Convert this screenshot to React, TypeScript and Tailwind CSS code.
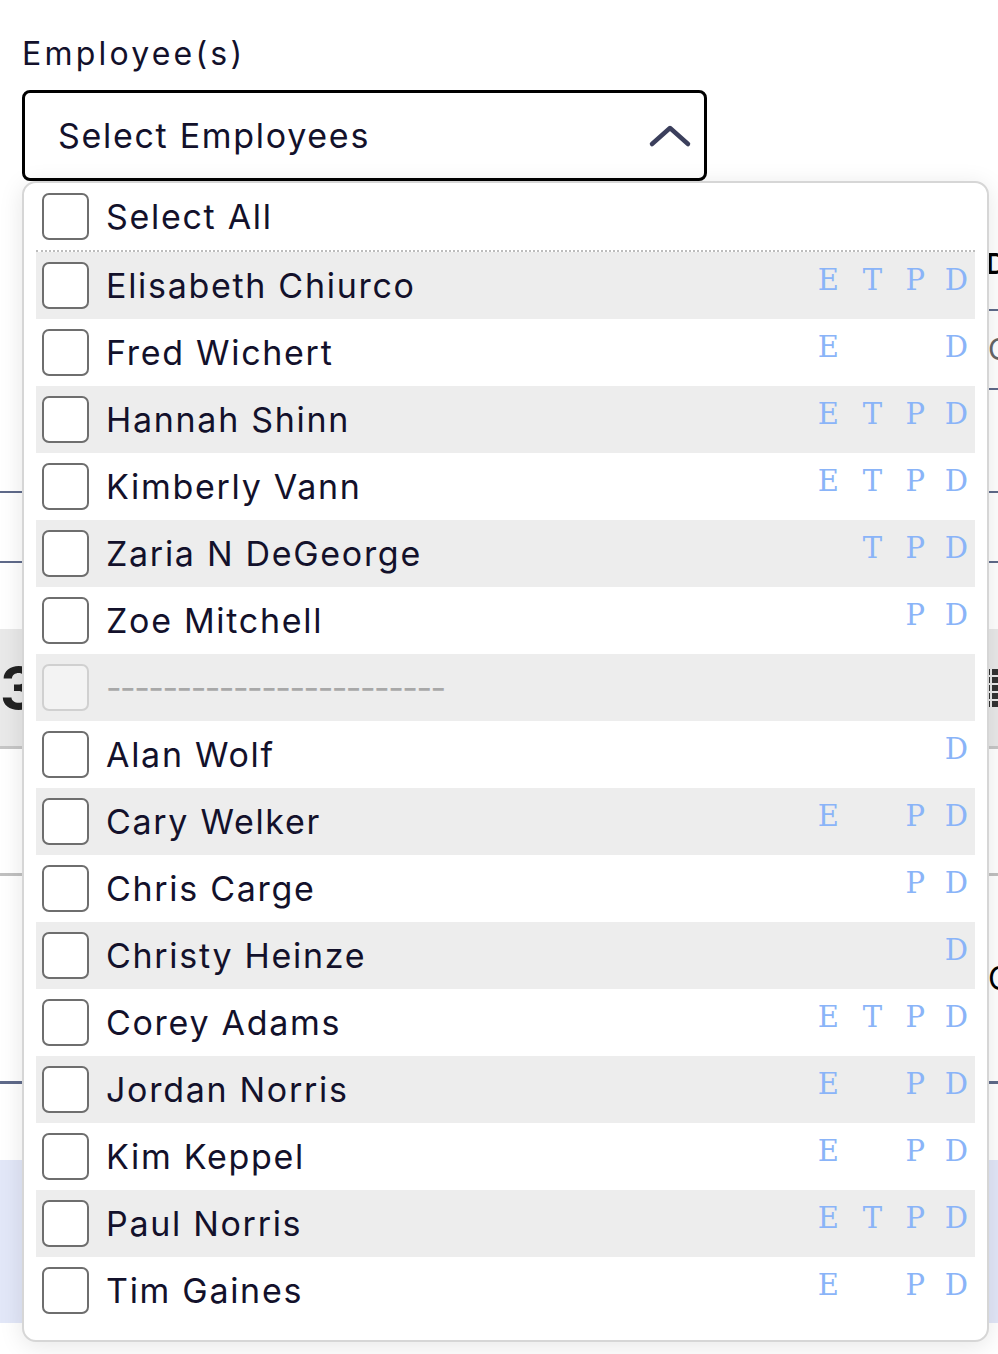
import React from "react";

type Emp = { name: string; flags: string[]; sep?: boolean };

const emps: Emp[] = [
  { name: "Elisabeth Chiurco", flags: ["E", "T", "P", "D"] },
  { name: "Fred Wichert", flags: ["E", "", "", "D"] },
  { name: "Hannah Shinn", flags: ["E", "T", "P", "D"] },
  { name: "Kimberly Vann", flags: ["E", "T", "P", "D"] },
  { name: "Zaria N DeGeorge", flags: ["", "T", "P", "D"] },
  { name: "Zoe Mitchell", flags: ["", "", "P", "D"] },
  { name: "", flags: [], sep: true },
  { name: "Alan Wolf", flags: ["", "", "", "D"] },
  { name: "Cary Welker", flags: ["E", "", "P", "D"] },
  { name: "Chris Carge", flags: ["", "", "P", "D"] },
  { name: "Christy Heinze", flags: ["", "", "", "D"] },
  { name: "Corey Adams", flags: ["E", "T", "P", "D"] },
  { name: "Jordan Norris", flags: ["E", "", "P", "D"] },
  { name: "Kim Keppel", flags: ["E", "", "P", "D"] },
  { name: "Paul Norris", flags: ["E", "T", "P", "D"] },
  { name: "Tim Gaines", flags: ["E", "", "P", "D"] },
];

function Box({ disabled }: { disabled?: boolean }) {
  return disabled ? (
    <div className="h-[47px] w-[47px] shrink-0 rounded-[7px] border-2 border-[#d0d0d0] bg-[#f3f3f3]" />
  ) : (
    <div className="h-[47px] w-[47px] shrink-0 rounded-[7px] border-2 border-[#6e6e6e] bg-white" />
  );
}

function Row({ e, idx }: { e: Emp; idx: number }) {
  const shaded = idx % 2 === 0;
  return (
    <div
      className={
        "flex h-[67px] items-center pl-[6px] pr-[7px] " +
        (shaded ? "bg-[#ededed]" : "bg-white")
      }
    >
      <Box disabled={e.sep} />
      {e.sep ? (
        <span className="ml-[17px] whitespace-pre text-[34px] leading-none tracking-[-0.045em] text-[#a8a8a8]">
          ------------------------
        </span>
      ) : (
        <span className="ml-[17px] whitespace-nowrap text-[34px] leading-none tracking-[0.05em] text-[#13112b]">
          {e.name}
        </span>
      )}
      {!e.sep && (
        <div className="ml-auto mt-[14px] flex self-start font-['DejaVu_Serif',serif] text-[29px] leading-[29px] text-[#8ab4f8]">
          {e.flags.map((f, i) => (
            <span key={i} className="w-[43px] text-right">
              {f}
            </span>
          ))}
        </div>
      )}
    </div>
  );
}

export default function App() {
  return (
    <div className="relative min-h-[1354px] overflow-hidden bg-white font-['Inter',sans-serif] text-[#13112b]">
      <div className="px-[22px] pt-[35px]">
        <div className="text-[32px] leading-[38px] tracking-[0.1em]">Employee(s)</div>
        <div className="mt-[17px] flex h-[91px] w-[685px] items-center justify-between rounded-[8px] border-[3px] border-black pl-[33px] pr-[12px]">
          <span className="text-[34px] leading-none tracking-[0.05em]">Select Employees</span>
          <svg width="44" height="26" viewBox="0 0 44 26" fill="none">
            <path d="M4 21 L22 5 L40 21" stroke="#3b3f5c" strokeWidth="4.5" strokeLinecap="round" strokeLinejoin="round" />
          </svg>
        </div>
      </div>

      {/* background page content under the dropdown */}
      <div className="flex flex-col">
        <div className="flex h-[130px]">
          <div className="flex-1" />
          <div className="flex w-[280px] flex-col justify-end border-b-2 border-[#5f6a8a] pb-[24px]">
            <span className="whitespace-nowrap pl-[268px] text-[28px] font-semibold text-black">Dept</span>
          </div>
        </div>
        <div className="flex h-[79px]">
          <div className="flex-1" />
          <div className="flex w-[280px] items-center border-b-2 border-[#5f6a8a]">
            <span className="whitespace-nowrap pl-[270px] text-[30px] text-[#666]">Choose</span>
          </div>
        </div>
        <div className="h-[103px] border-b-2 border-[#5f6a8a]" />
        <div className="h-[70px] border-b-2 border-[#5f6a8a]" />
        <div className="h-[66px]" />
        <div className="flex h-[120px] items-center justify-between border-b-[3px] border-[#c6c6c6] bg-[#e9e9e9]">
          <span className="text-[58px] font-bold leading-none text-[#222]">3</span>
          <div className="grid grid-cols-2 gap-[2px]">
            {Array.from({ length: 10 }).map((_, i) => (
              <div key={i} className="h-[6px] w-[6px] bg-[#333]" />
            ))}
          </div>
        </div>
        <div className="h-[127px] border-b-[3px] border-[#c0c0c0]" />
        <div className="flex h-[208px] items-center border-b-[3px] border-[#5f6a8a] pl-[988px]">
          <span className="whitespace-nowrap text-[32px] text-black">C</span>
        </div>
        <div className="h-[76px]" />
        <div className="h-[163px] bg-[#e2e7f8]" />
      </div>

      {/* dropdown panel */}
      <div className="absolute left-[22px] top-[181px] w-[967px] rounded-[14px] border-2 border-[#d6d6d6] bg-white px-[12px] pb-[16px] shadow-[0_4px_24px_rgba(0,0,0,0.10)]">
        <div className="flex h-[69px] items-center border-b-2 border-dotted border-[#bdbdbd] pl-[6px]">
          <Box />
          <span className="ml-[17px] text-[34px] leading-none tracking-[0.05em] text-[#13112b]">Select All</span>
        </div>
        {emps.map((e, i) => (
          <Row key={i} e={e} idx={i} />
        ))}
      </div>
    </div>
  );
}
